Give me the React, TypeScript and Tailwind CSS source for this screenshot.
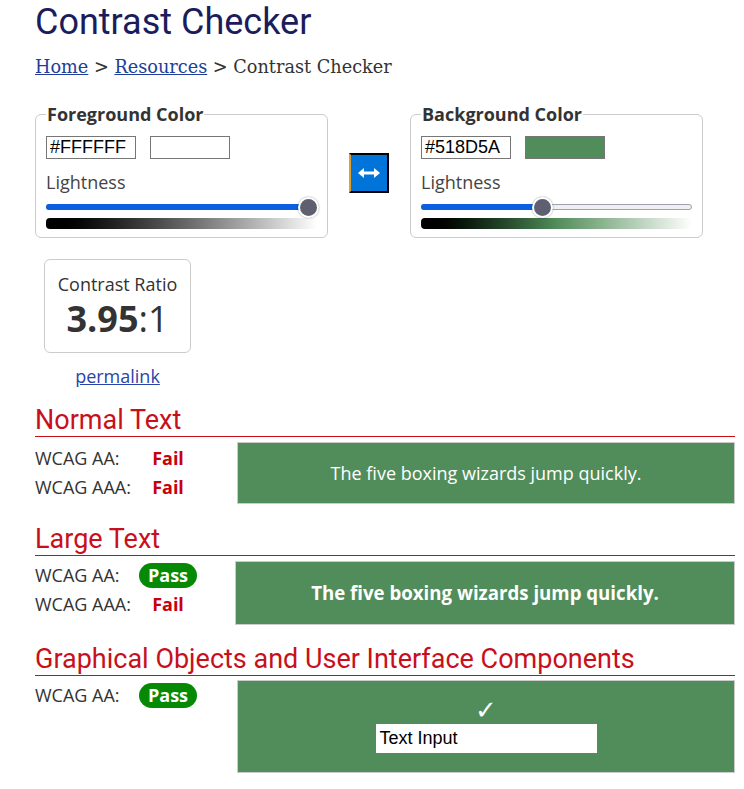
import React from "react";

const sans = "font-['Open_Sans',sans-serif]";
const roboto = "font-['Roboto',sans-serif]";
const arial = "font-['Liberation_Sans',Arial,sans-serif]";

function Slider({ thumbLeft, gradient }: { thumbLeft: number; gradient: "fg" | "bg" }) {
  return (
    <div className="mt-px">
      <div className="relative h-[23px]">
        <div className="absolute top-[9px] left-0 h-[6px] w-full rounded-full border border-[#a0a0b0] bg-[#f0f0f2]" />
        <div
          className="absolute top-[9px] left-0 h-[6px] rounded-full bg-[#0b5fe0]"
          style={{ width: thumbLeft + 10 }}
        />
        <div
          className="absolute top-[2px] h-[21px] w-[21px] rounded-full border-2 border-white bg-[#5f5f72] shadow-[0_0_2px_rgba(0,0,0,0.4)]"
          style={{ left: thumbLeft }}
        />
      </div>
      <div
        className={`h-[11px] rounded-l-[4px] bg-gradient-to-r from-black to-white ${
          gradient === "bg" ? "via-[#518D5A]" : ""
        }`}
      />
    </div>
  );
}

function ColorBox({
  title,
  value,
  swatch,
  thumbLeft,
  gradient,
}: {
  title: string;
  value: string;
  swatch: string;
  thumbLeft: number;
  gradient: "fg" | "bg";
}) {
  return (
    <fieldset className="w-[293px] rounded-md border border-[#cccccc] px-[10px] pt-[10px] pb-[8px]">
      <legend className={`${sans} px-px text-[18px] leading-[24px] font-bold text-[#333]`}>{title}</legend>
      <div className="flex items-center gap-[14px]">
        <div className={`${arial} h-[23px] w-[90px] border border-[#767676] bg-white pl-[3px] text-[18px] leading-[21px] text-black`}>
          {value}
        </div>
        <div className="h-[23px] w-[80px] border border-[#767676]" style={{ backgroundColor: swatch }} />
      </div>
      <div className={`${sans} mt-[11px] text-[18px] leading-[24px] text-[#444]`}>Lightness</div>
      <Slider thumbLeft={thumbLeft} gradient={gradient} />
    </fieldset>
  );
}

function Status({ pass }: { pass: boolean }) {
  return (
    <div className="flex w-[58px] justify-center">
      {pass ? (
        <span className="flex h-[25px] items-center rounded-full bg-[#068a06] px-[9px] text-[18px] font-bold text-white">
          Pass
        </span>
      ) : (
        <span className="text-[18px] font-bold text-[#c8000a]">Fail</span>
      )}
    </div>
  );
}

function Row({ label, pass }: { label: string; pass: boolean }) {
  return (
    <div className="flex h-[29px] items-center">
      <span className="w-[104px] text-[18px] text-[#333]">{label}</span>
      <Status pass={pass} />
    </div>
  );
}

function Heading({ children }: { children: React.ReactNode }) {
  return (
    <h2 className={`${roboto} border-b border-solid border-b-[#c8101c] pb-px text-[27px] leading-[30px] text-[#c8101c]`}>
      {children}
    </h2>
  );
}

export default function App() {
  return (
    <div className={`${sans} min-h-screen bg-white`}>
      <div className="ml-[35px] w-[700px]">
        <h1 className={`${roboto} text-[36px] leading-[44px] text-[#1b1c5c]`}>Contrast Checker</h1>
        <nav className="mt-[11px] font-['DejaVu_Serif',serif] text-[17.7px] leading-[24px] text-[#333]">
          <a href="#" className="text-[#203d9a] underline">Home</a> &gt;{" "}
          <a href="#" className="text-[#203d9a] underline">Resources</a> &gt; Contrast Checker
        </nav>

        <div className="mt-[23px] flex items-start gap-[21px]">
          <ColorBox title="Foreground Color" value="#FFFFFF" swatch="#FFFFFF" thumbLeft={252} gradient="fg" />
          <button className="mt-[51px] flex h-[40px] w-[40px] items-center justify-center border-2 border-black border-l-[#e0a030] bg-[#0074d9]">
            <svg width="24" height="14" viewBox="0 0 24 14">
              <path d="M5 7h14" stroke="white" strokeWidth="3" />
              <path d="M1 7l6-5v10z" fill="white" />
              <path d="M23 7l-6-5v10z" fill="white" />
            </svg>
          </button>
          <ColorBox title="Background Color" value="#518D5A" swatch="#518D5A" thumbLeft={111} gradient="bg" />
        </div>

        <div className="mt-[21px] ml-[9px] flex w-[147px] flex-col items-center">
          <div className="flex h-[94px] w-full flex-col items-center rounded-md border border-[#cccccc] pt-[12px] text-[#333]">
            <div className="text-[18px] leading-[24px]">Contrast Ratio</div>
            <div className="text-[36px] leading-[46px]">
              <span className="font-bold">3.95</span>:1
            </div>
          </div>
          <a href="#" className="mt-[11px] text-[18px] leading-[24px] text-[#2a44a8] underline">
            permalink
          </a>
        </div>

        <div className="mt-[17px]">
          <Heading>Normal Text</Heading>
          <div className="mt-[5px] flex">
            <div className="w-[202px] pt-[2px]">
              <Row label="WCAG AA:" pass={false} />
              <Row label="WCAG AAA:" pass={false} />
            </div>
            <div className="flex h-[62px] flex-1 items-center justify-center border border-[#cccccc] bg-[#518D5A] text-[18px] text-white">
              The five boxing wizards jump quickly.
            </div>
          </div>
        </div>

        <div className="mt-[20px]">
          <Heading>Large Text</Heading>
          <div className="mt-[5px] flex">
            <div className="w-[200px]">
              <Row label="WCAG AA:" pass={true} />
              <Row label="WCAG AAA:" pass={false} />
            </div>
            <div className="flex h-[64px] flex-1 items-center justify-center border border-[#cccccc] bg-[#518D5A] text-[18.67px] font-bold text-white">
              The five boxing wizards jump quickly.
            </div>
          </div>
        </div>

        <div className="mt-[19px]">
          <Heading>Graphical Objects and User Interface Components</Heading>
          <div className="mt-[4px] flex">
            <div className="w-[202px] pt-px">
              <Row label="WCAG AA:" pass={true} />
            </div>
            <div className="flex h-[93px] flex-1 flex-col items-center border border-[#cccccc] bg-[#518D5A] pt-[15px]">
              <div className="font-['DejaVu_Sans',sans-serif] text-[26px] leading-[28px] font-bold text-white">✓</div>
              <div className={`${arial} flex h-[29px] w-[221px] items-center bg-white pl-[4px] text-[18px] text-black`}>
                Text Input
              </div>
            </div>
          </div>
        </div>
      </div>
    </div>
  );
}
